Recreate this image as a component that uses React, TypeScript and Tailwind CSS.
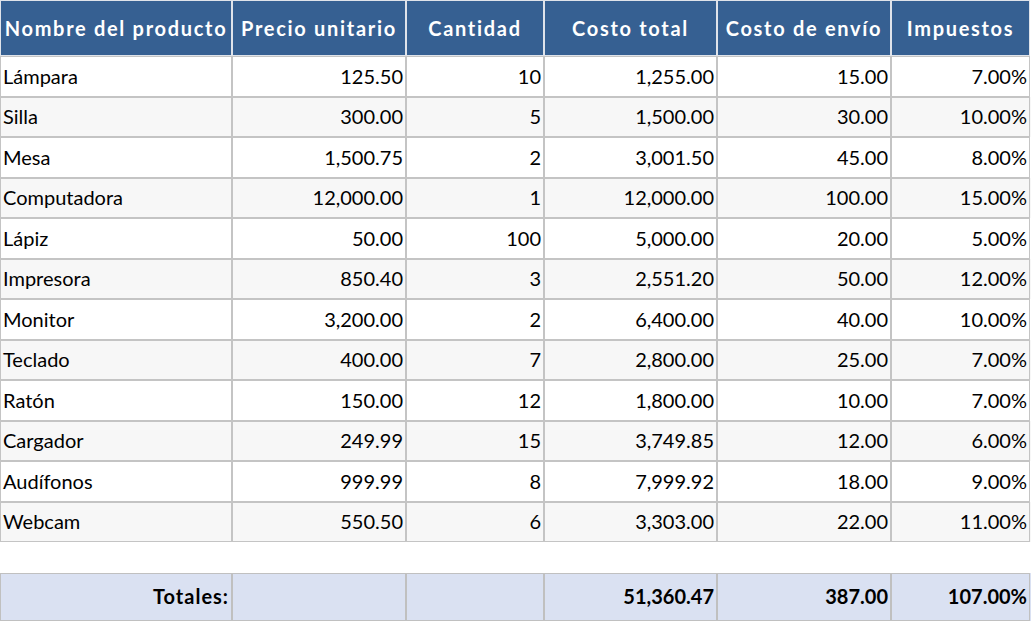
import React from "react";

const widths = ["w-[232px]", "w-[174px]", "w-[138px]", "w-[173px]", "w-[174px]", "w-[139px]"];

const headers = ["Nombre del producto", "Precio unitario", "Cantidad", "Costo total", "Costo de envío", "Impuestos"];

const rows: string[][] = [
  ["Lámpara", "125.50", "10", "1,255.00", "15.00", "7.00%"],
  ["Silla", "300.00", "5", "1,500.00", "30.00", "10.00%"],
  ["Mesa", "1,500.75", "2", "3,001.50", "45.00", "8.00%"],
  ["Computadora", "12,000.00", "1", "12,000.00", "100.00", "15.00%"],
  ["Lápiz", "50.00", "100", "5,000.00", "20.00", "5.00%"],
  ["Impresora", "850.40", "3", "2,551.20", "50.00", "12.00%"],
  ["Monitor", "3,200.00", "2", "6,400.00", "40.00", "10.00%"],
  ["Teclado", "400.00", "7", "2,800.00", "25.00", "7.00%"],
  ["Ratón", "150.00", "12", "1,800.00", "10.00", "7.00%"],
  ["Cargador", "249.99", "15", "3,749.85", "12.00", "6.00%"],
  ["Audífonos", "999.99", "8", "7,999.92", "18.00", "9.00%"],
  ["Webcam", "550.50", "6", "3,303.00", "22.00", "11.00%"],
];

const totals = ["Totales:", "", "", "51,360.47", "387.00", "107.00%"];

export default function App() {
  return (
    <div className="w-[1031px] bg-white text-[20px] text-black" style={{ fontFamily: "Lato, 'Liberation Sans', sans-serif" }}>
      <div className="flex h-[56px]">
        {headers.map((h, i) => (
          <div
            key={i}
            className={`${widths[i]} shrink-0 flex items-center justify-center border border-[#dfe3ea] bg-[#366092] font-bold text-white whitespace-nowrap overflow-hidden tracking-[1.7px]`}
          >
            {h}
          </div>
        ))}
      </div>
      {rows.map((r, ri) => (
        <div key={ri} className={`flex ${ri % 2 === 0 ? "h-[41px] bg-white" : "h-[40px] bg-[#f7f7f7]"}`}>
          {r.map((c, ci) => (
            <div
              key={ci}
              className={`${widths[ci]} shrink-0 flex items-center border border-[#c4c4c4] px-[2px] pb-[2px] whitespace-nowrap ${ci === 0 ? "justify-start" : "justify-end"}`}
            >
              {c}
            </div>
          ))}
        </div>
      ))}
      <div className="h-[31px]" />
      <div className="flex h-[48px] bg-[#dae1f2]">
        {totals.map((c, ci) => (
          <div
            key={ci}
            className={`${widths[ci]} shrink-0 flex items-center justify-end border border-[#c0c0c0] px-[2px] pb-[2px] font-bold whitespace-nowrap ${ci === 0 ? "tracking-[1px]" : ""}`}
          >
            {c}
          </div>
        ))}
      </div>
    </div>
  );
}
